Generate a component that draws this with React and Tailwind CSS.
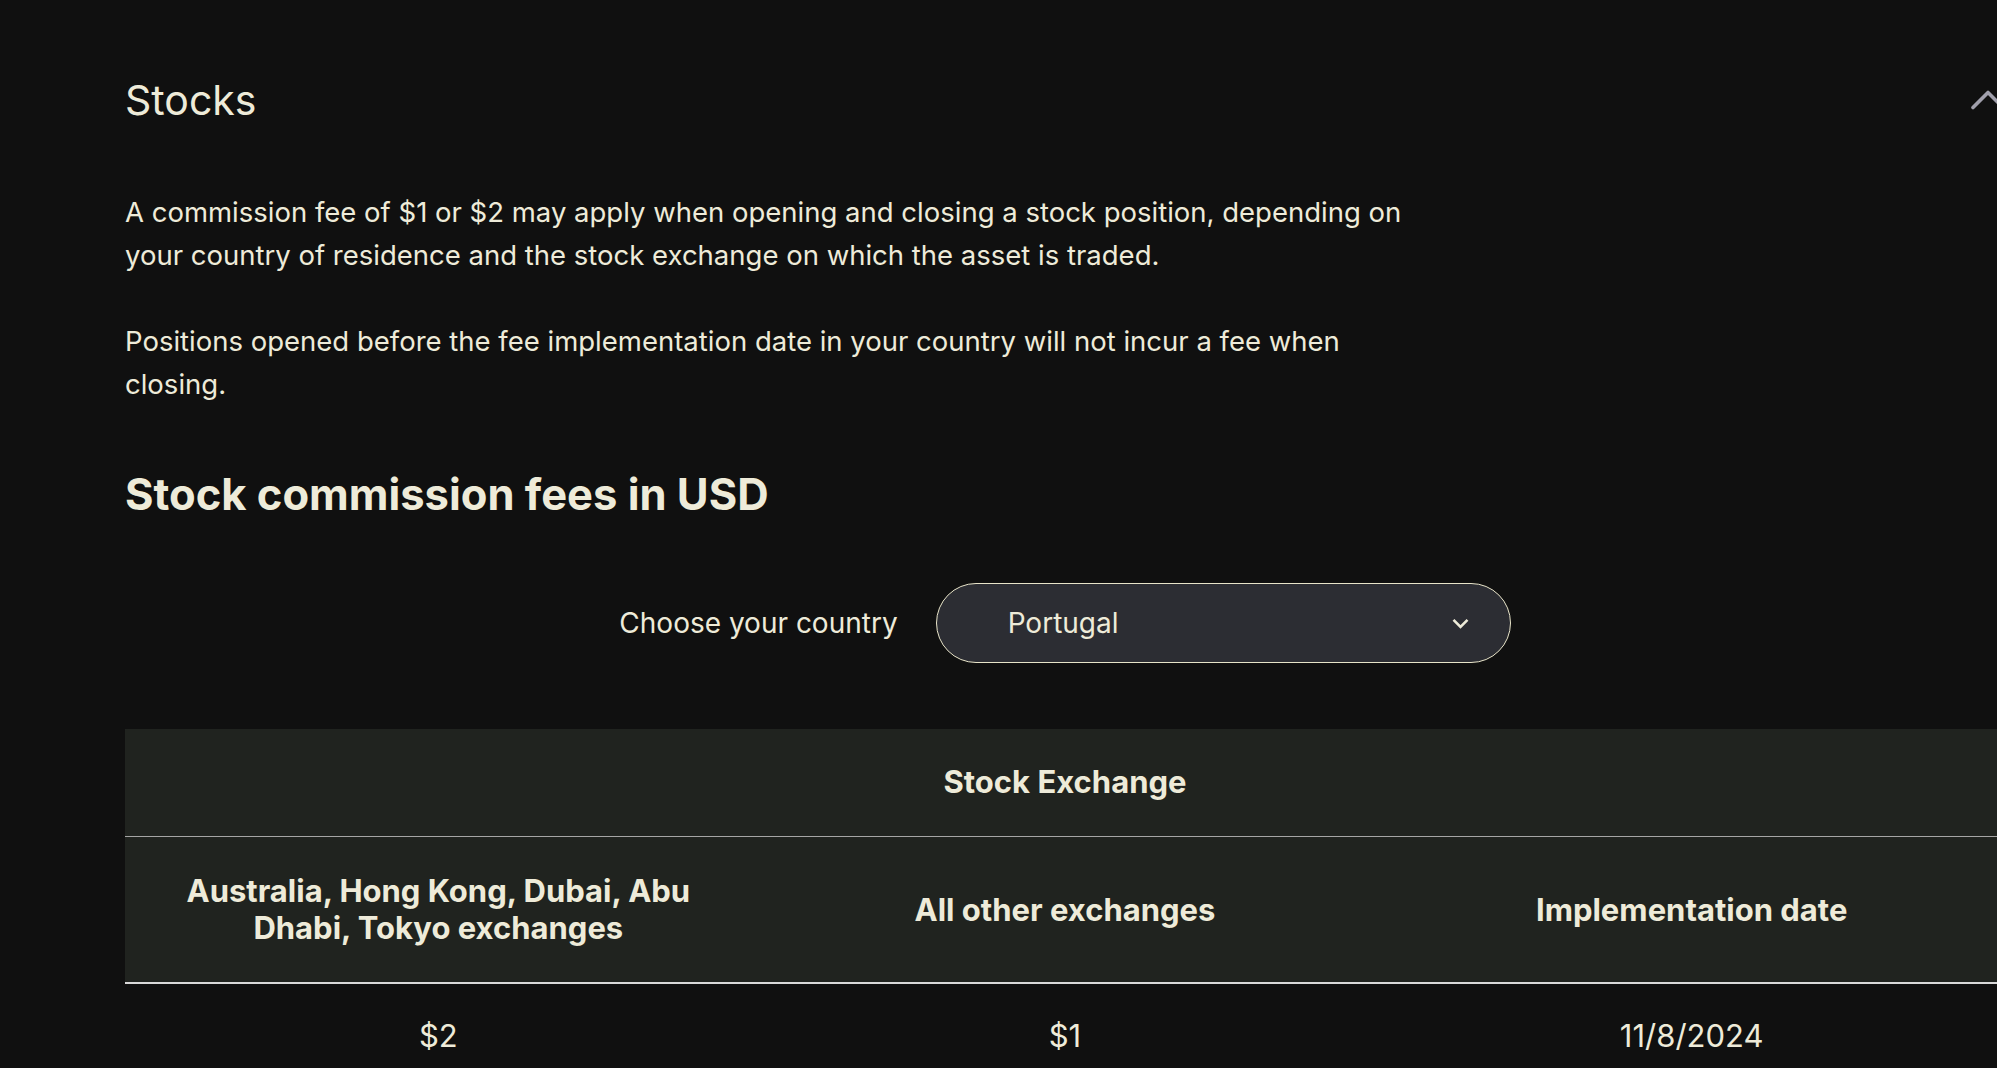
import { useState } from "react";

const rows = [{ asia: "$2", other: "$1", date: "11/8/2024" }];

const App = () => {
  const [country] = useState("Portugal");
  const [open, setOpen] = useState(true);

  return (
    <div
      className="min-h-screen w-full overflow-hidden bg-[#101010] text-[#eeebd9]"
      style={{ fontFamily: "Inter, 'Noto Sans', sans-serif" }}
    >
      <div className="ml-[125px] w-[1880px]">
        {/* Accordion header */}
        <div className="flex items-center justify-between pt-[76px]">
          <h2 className="text-[41px] leading-[48px] font-normal">Stocks</h2>
          <button
            type="button"
            onClick={() => setOpen(!open)}
            aria-label="Toggle section"
            className="text-[#a09fab]"
          >
            <svg width="34" height="20" viewBox="0 0 34 20" fill="none">
              <path d="M2 17.5L17 2.5L32 17.5" stroke="currentColor" strokeWidth="3.6" strokeLinecap="round" strokeLinejoin="round" />
            </svg>
          </button>
        </div>

        {/* Intro */}
        <div className="mt-[67px] max-w-[1300px] text-[27.5px] leading-[43px]">
          <p>
            A commission fee of $1 or $2 may apply when opening and closing a stock position, depending on your country
            of residence and the stock exchange on which the asset is traded.
          </p>
          <p className="mt-[43px]">
            Positions opened before the fee implementation date in your country will not incur a fee when closing.
          </p>
        </div>

        <h3 className="mt-[62px] text-[43.5px] leading-[52px] font-bold">Stock commission fees in USD</h3>

        {/* Country picker */}
        <div className="mt-[63px] flex items-center justify-center gap-[38px]">
          <span className="text-[28px]">Choose your country</span>
          <button
            type="button"
            className="flex h-[80px] w-[575px] items-center justify-between rounded-full border border-[#e8e4c9] bg-[#2c2d33] pl-[71px] pr-[41px]"
          >
            <span className="text-[28px]">{country}</span>
            <svg width="17" height="11" viewBox="0 0 17 11" fill="none">
              <path d="M1.5 1.8L8.5 8.8L15.5 1.8" stroke="currentColor" strokeWidth="2.6" />
            </svg>
          </button>
        </div>

        {/* Fee table */}
        <table className="mt-[66px] w-full table-fixed border-collapse text-center">
          <thead className="bg-[#20231f]">
            <tr className="border-b border-[#a5a5a5]">
              <th colSpan={3} className="h-[107px] text-[31px] font-bold">
                Stock Exchange
              </th>
            </tr>
            <tr className="border-b-2 border-[#d9d9d9]">
              <th className="h-[147px] text-[31px] leading-[37px] font-bold">
                <span className="mx-auto block max-w-[540px]">Australia, Hong Kong, Dubai, Abu Dhabi, Tokyo exchanges</span>
              </th>
              <th className="text-[31px] leading-[37px] font-bold">All other exchanges</th>
              <th className="text-[31px] leading-[37px] font-bold">Implementation date</th>
            </tr>
          </thead>
          <tbody>
            {rows.map((r) => (
              <tr key={r.date}>
                <td className="h-[106px] text-[31px]">{r.asia}</td>
                <td className="text-[31px]">{r.other}</td>
                <td className="text-[31px]">{r.date}</td>
              </tr>
            ))}
          </tbody>
        </table>
      </div>
    </div>
  );
};

export default App;
